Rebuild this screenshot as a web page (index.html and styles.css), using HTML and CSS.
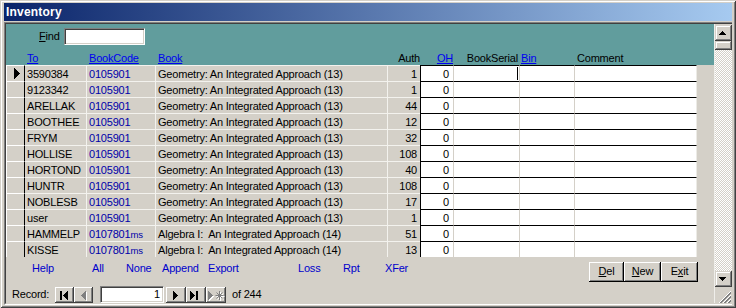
FILE: index.html
```html
<!DOCTYPE html>
<html>
<head>
<meta charset="utf-8">
<link rel="stylesheet" href="styles.css">
</head>
<body>
<div class="window">
  <div class="titlebar">Inventory</div>
  <div class="client">
    <div class="client-in">
      <div class="form">
        <div class="header">
          <div class="find-row"><span class="find-label"><u>F</u>ind</span><div class="find-box"></div></div>
          <div class="cols labels">
            <span></span>
            <span class="hl lnk">To</span>
            <span class="hl lnk">BookCode</span>
            <span class="hl lnk">Book</span>
            <span class="hr">Auth</span>
            <span class="hr lnk">OH</span>
            <span class="hr hbs">BookSerial</span>
            <span class="hl lnk">Bin</span>
            <span class="hl hcm">Comment</span>
          </div>
        </div>
        <div class="rows">
          <div class="row cols">
            <div class="c sel"><svg class="cur" width="6" height="11" viewBox="0 0 6 11"><path d="M0 0h1v1h1v1h1v1h1v1h1v1h1v1h-1v1h-1v1h-1v1h-1v1h-1v1H0z" fill="#000"/></svg></div>
            <div class="c g">3590384</div><div class="c g code">0105901</div><div class="c g">Geometry: An Integrated Approach (13)</div><div class="c g n">1</div>
            <div class="c w oh">0</div><div class="c w caret"></div><div class="c w"></div><div class="c w cm"></div>
          </div>
          <div class="row cols">
            <div class="c sel"></div>
            <div class="c g">9123342</div><div class="c g code">0105901</div><div class="c g">Geometry: An Integrated Approach (13)</div><div class="c g n">1</div>
            <div class="c w oh">0</div><div class="c w"></div><div class="c w"></div><div class="c w cm"></div>
          </div>
          <div class="row cols">
            <div class="c sel"></div>
            <div class="c g">ARELLAK</div><div class="c g code">0105901</div><div class="c g">Geometry: An Integrated Approach (13)</div><div class="c g n">44</div>
            <div class="c w oh">0</div><div class="c w"></div><div class="c w"></div><div class="c w cm"></div>
          </div>
          <div class="row cols">
            <div class="c sel"></div>
            <div class="c g">BOOTHEE</div><div class="c g code">0105901</div><div class="c g">Geometry: An Integrated Approach (13)</div><div class="c g n">12</div>
            <div class="c w oh">0</div><div class="c w"></div><div class="c w"></div><div class="c w cm"></div>
          </div>
          <div class="row cols">
            <div class="c sel"></div>
            <div class="c g">FRYM</div><div class="c g code">0105901</div><div class="c g">Geometry: An Integrated Approach (13)</div><div class="c g n">32</div>
            <div class="c w oh">0</div><div class="c w"></div><div class="c w"></div><div class="c w cm"></div>
          </div>
          <div class="row cols">
            <div class="c sel"></div>
            <div class="c g">HOLLISE</div><div class="c g code">0105901</div><div class="c g">Geometry: An Integrated Approach (13)</div><div class="c g n">108</div>
            <div class="c w oh">0</div><div class="c w"></div><div class="c w"></div><div class="c w cm"></div>
          </div>
          <div class="row cols">
            <div class="c sel"></div>
            <div class="c g">HORTOND</div><div class="c g code">0105901</div><div class="c g">Geometry: An Integrated Approach (13)</div><div class="c g n">40</div>
            <div class="c w oh">0</div><div class="c w"></div><div class="c w"></div><div class="c w cm"></div>
          </div>
          <div class="row cols">
            <div class="c sel"></div>
            <div class="c g">HUNTR</div><div class="c g code">0105901</div><div class="c g">Geometry: An Integrated Approach (13)</div><div class="c g n">108</div>
            <div class="c w oh">0</div><div class="c w"></div><div class="c w"></div><div class="c w cm"></div>
          </div>
          <div class="row cols">
            <div class="c sel"></div>
            <div class="c g">NOBLESB</div><div class="c g code">0105901</div><div class="c g">Geometry: An Integrated Approach (13)</div><div class="c g n">17</div>
            <div class="c w oh">0</div><div class="c w"></div><div class="c w"></div><div class="c w cm"></div>
          </div>
          <div class="row cols">
            <div class="c sel"></div>
            <div class="c g">user</div><div class="c g code">0105901</div><div class="c g">Geometry: An Integrated Approach (13)</div><div class="c g n">1</div>
            <div class="c w oh">0</div><div class="c w"></div><div class="c w"></div><div class="c w cm"></div>
          </div>
          <div class="row cols">
            <div class="c sel"></div>
            <div class="c g">HAMMELP</div><div class="c g code">0107801<small>ms</small></div><div class="c g">Algebra I:  An Integrated Approach (14)</div><div class="c g n">51</div>
            <div class="c w oh">0</div><div class="c w"></div><div class="c w"></div><div class="c w cm"></div>
          </div>
          <div class="row cols">
            <div class="c sel"></div>
            <div class="c g">KISSE</div><div class="c g code">0107801<small>ms</small></div><div class="c g">Algebra I:  An Integrated Approach (14)</div><div class="c g n">13</div>
            <div class="c w oh">0</div><div class="c w"></div><div class="c w"></div><div class="c w cm"></div>
          </div>
        </div>
        <div class="footer">
          <div class="f-top">
            <div class="links">
              <span></span><span>Help</span><span>All</span><span>None</span><span>Append</span><span>Export</span><span>Loss</span><span>Rpt</span><span>XFer</span>
            </div>
            <div class="btns">
              <div class="btn b-del"><u>D</u>el</div>
              <div class="btn b-new"><u>N</u>ew</div>
              <div class="btn b-exit">E<u>x</u>it</div>
            </div>
          </div>
          <div class="nav">
            <span class="rec">Record:</span>
            <div class="nb"><svg width="19" height="16"><rect x="5" y="4" width="2" height="9" fill="#000"/><path d="M12 4h1v9h-1v-1h-1v-1h-1v-1h-1v-1h-1v-1h1v-1h1v-1h1v-1h1z" fill="#000"/></svg></div>
            <div class="nb"><svg width="19" height="16"><path transform="translate(1 1)" d="M11 4h1v9h-1v-1h-1v-1h-1v-1h-1v-1h-1v-1h1v-1h1v-1h1v-1h1z" fill="#fff"/><path d="M11 4h1v9h-1v-1h-1v-1h-1v-1h-1v-1h-1v-1h1v-1h1v-1h1v-1h1z" fill="#808080"/></svg></div>
            <div class="recbox">1</div>
            <div class="nb w20"><svg width="20" height="16"><path d="M7 4h1v1h1v1h1v1h1v1h1v1h-1v1h-1v1h-1v1h-1v1h-1z" fill="#000"/></svg></div>
            <div class="nb w20"><svg width="20" height="16"><path d="M4 4h1v1h1v1h1v1h1v1h1v1h-1v1h-1v1h-1v1h-1v1h-1z" fill="#000"/><rect x="10" y="4" width="2" height="9" fill="#000"/></svg></div>
            <div class="nb w20"><svg width="20" height="16"><g transform="translate(1 1)" fill="#fff" stroke="#fff"><path d="M2 4h1v1h1v1h1v1h1v1h1v1h-1v1h-1v1h-1v1h-1v1h-1z" stroke="none"/><path d="M13.5 4v9M9.5 8.5h8M10.5 5.5l6 6M16.5 5.5l-6 6" fill="none"/></g><g fill="#808080" stroke="#808080"><path d="M2 4h1v1h1v1h1v1h1v1h1v1h-1v1h-1v1h-1v1h-1v1h-1z" stroke="none"/><path d="M13.5 4v9M9.5 8.5h8M10.5 5.5l6 6M16.5 5.5l-6 6" fill="none"/></g></svg></div>
            <span class="of">of 244</span>
          </div>
        </div>
      </div>
      <div class="vscroll">
        <div class="sb"><svg width="17" height="16"><path d="M7 6h1v1h1v1h1v1h1v1H4V9h1V8h1V7h1z" fill="#000"/></svg></div>
        <div class="thumb"></div>
        <div class="track"></div>
        <div class="sb"><svg width="17" height="16"><path d="M4 6h7v1h-1v1h-1v1h-1v1h-1V9H6V8H5V7H4z" fill="#000"/></svg></div>
        <div class="grip"><svg width="17" height="16" shape-rendering="crispEdges"><path d="M16 4L4 16M16 8L8 16M16 12L12 16" stroke="#fff"/><path d="M16 5L5 16M16 6L6 16M16 9L9 16M16 10L10 16M16 13L13 16M16 14L14 16" stroke="#808080"/></svg></div>
      </div>
    </div>
  </div>
</div>
</body>
</html>
```

FILE: styles.css
```css
html, body {
  margin: 0;
  padding: 0;
}
body {
  width: 736px;
  height: 308px;
  overflow: hidden;
  font-family: "Liberation Sans", Arial, sans-serif;
  font-size: 11px;
  letter-spacing: -0.2px;
  color: #000;
  background: #d4d0c8;
}
.window {
  box-sizing: border-box;
  width: 736px;
  height: 308px;
  padding: 3px 4px;
  background: #d4d0c8;
  box-shadow: inset 1px 1px 0 #d4d0c8, inset -1px -1px 0 #404040, inset 2px 2px 0 #ffffff, inset -2px -2px 0 #808080;
  display: flex;
  flex-direction: column;
}
.titlebar {
  height: 18px;
  flex: none;
  margin-bottom: 1px;
  padding-left: 2px;
  background: linear-gradient(to right, #0a246a, #a6caf0);
  color: #fff;
  font-weight: bold;
  font-size: 12px;
  line-height: 18px;
  letter-spacing: 0.2px;
}
.client {
  flex: 1;
  display: flex;
  border-top: 1px solid #808080;
  border-left: 1px solid #808080;
  border-bottom: 1px solid #ffffff;
}
.client-in {
  flex: 1;
  display: flex;
  border-top: 1px solid #404040;
  border-left: 1px solid #404040;
  border-bottom: 1px solid #d4d0c8;
}
.form {
  width: 708px;
  flex: none;
  display: flex;
  flex-direction: column;
  background: #d4d0c8;
}
.header {
  height: 41px;
  box-sizing: border-box;
  padding-top: 4px;
  background: #619d9d;
}
.find-row {
  display: flex;
  height: 17px;
  line-height: 17px;
  padding-left: 33px;
  gap: 4px;
}
.find-box {
  width: 81px;
  height: 17px;
  box-sizing: border-box;
  background: #fff;
  border: 1px solid;
  border-color: #808080 #ffffff #ffffff #808080;
  box-shadow: inset 1px 1px 0 #404040, inset -1px -1px 0 #d4d0c8;
}
.cols {
  display: grid;
  grid-template-columns: 19px 62px 69px 232px 32px 33px 66px 55px 123px;
}
.labels {
  margin-top: 6px;
  height: 14px;
  line-height: 14px;
  white-space: nowrap;
}
.hl { padding-left: 2px; }
.hcm { padding-left: 3px; }
.hr { text-align: right; }
.hbs { padding-right: 1px; }
.lnk {
  color: #0000f0;
  text-decoration: underline;
}
.rows {
  height: 192px;
}
.row {
  height: 16px;
}
.c {
  height: 16px;
  box-sizing: border-box;
  padding-top: 1px;
  line-height: 15px;
  white-space: pre;
  overflow: hidden;
}
.sel {
  background: #d4d0c8;
  border-top: 1px solid #ffffff;
  border-left: 1px solid #ffffff;
  border-right: 1px solid #000000;
  padding-top: 2px;
  padding-left: 7px;
}
.cur { display: block; }
.g {
  background: #d4d0c8;
  border-top: 1px solid #f3f2ee;
  border-right: 1px solid #f3f2ee;
  padding-left: 2px;
}
.g.n {
  border-right: 0;
  text-align: right;
  padding-right: 3px;
}
.code { color: #0000a8; }
.code small { font-size: 9.5px; letter-spacing: 0; }
.w {
  background: #fff;
  border-top: 1px solid #000000;
  border-left: 1px solid #d4d0c8;
}
.w.oh {
  border-left-color: #000000;
  text-align: right;
  padding-right: 4px;
}
.w.cm { border-right: 1px solid #ecebe6; }
.caret { position: relative; }
.caret::after {
  content: "";
  position: absolute;
  right: 1px;
  top: 1px;
  width: 1px;
  height: 13px;
  background: #000;
}
.footer {
  flex: 1;
  padding-top: 5px;
  display: flex;
  flex-direction: column;
  gap: 4px;
}
.f-top {
  display: flex;
  justify-content: space-between;
  height: 20px;
  padding-right: 16px;
}
.links {
  display: grid;
  grid-template-columns: 26px 60px 34px 36px 46px 90px 45px 42px 30px;
  align-self: flex-start;
  line-height: 12px;
  color: #0000cc;
}
.btns { display: flex; }
.btn {
  height: 20px;
  box-sizing: border-box;
  padding-bottom: 2px;
  line-height: 18px;
  text-align: center;
  background: #d4d0c8;
  box-shadow: inset -1px -1px 0 #000000, inset 1px 1px 0 #ffffff, inset -2px -2px 0 #808080;
}
.b-del { width: 35px; }
.b-new { width: 37px; }
.b-exit { width: 37px; }
.nav {
  display: flex;
  align-items: center;
  height: 17px;
  line-height: 17px;
}
.rec {
  width: 49px;
  box-sizing: border-box;
  padding-left: 6px;
}
.nb {
  width: 19px;
  height: 16px;
  background: #d4d0c8;
  box-shadow: inset -1px -1px 0 #404040, inset 1px 1px 0 #ffffff, inset -2px -2px 0 #808080;
}
.nb svg { display: block; }
.nb.w20 { width: 20px; }
.recbox {
  width: 64px;
  height: 17px;
  margin-left: 7px;
  margin-right: 2px;
  box-sizing: border-box;
  background: #fff;
  border: 1px solid;
  border-color: #808080 #ffffff #ffffff #808080;
  box-shadow: inset 1px 1px 0 #404040, inset -1px -1px 0 #d4d0c8;
  text-align: right;
  padding-right: 3px;
  line-height: 15px;
}
.of { margin-left: 6px; }
.vscroll {
  width: 18px;
  flex: none;
  box-sizing: border-box;
  border-left: 1px solid #efeeea;
  padding-top: 1px;
  display: flex;
  flex-direction: column;
  background: #d4d0c8;
}
.sb, .thumb {
  flex: none;
  height: 16px;
  background: #d4d0c8;
  box-shadow: inset -1px -1px 0 #404040, inset 1px 1px 0 #d4d0c8, inset -2px -2px 0 #808080, inset 2px 2px 0 #ffffff;
}
.sb svg, .grip svg { display: block; }
.thumb { height: 9px; }
.track {
  flex: 1;
  background-image: repeating-conic-gradient(#ffffff 0% 25%, #d4d0c8 0% 50%);
  background-size: 2px 2px;
}
.grip {
  flex: none;
  height: 16px;
}
```
